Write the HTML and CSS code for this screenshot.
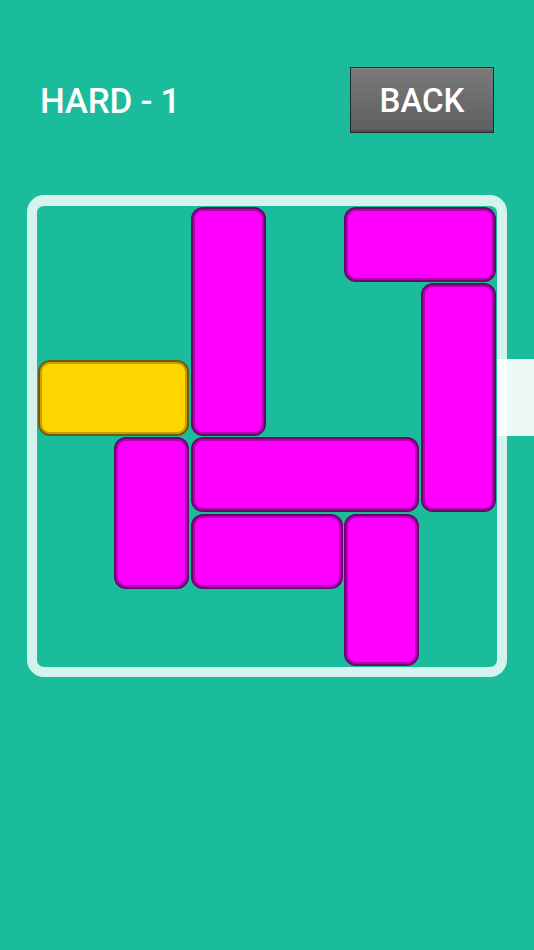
FILE: index.html
```html
<!DOCTYPE html>
<html>
<head>
<meta charset="utf-8">
<link rel="stylesheet" href="styles.css">
</head>
<body>
<div class="page">
  <header class="header">
    <div class="title">HARD - 1</div>
    <button class="back">BACK</button>
  </header>
  <div class="board">
    <div class="grid">
      <div class="block pink" style="grid-column:3/4;grid-row:1/4"></div>
      <div class="block pink" style="grid-column:5/7;grid-row:1/2"></div>
      <div class="block pink" style="grid-column:6/7;grid-row:2/5"></div>
      <div class="block gold" style="grid-column:1/3;grid-row:3/4"></div>
      <div class="block pink" style="grid-column:2/3;grid-row:4/6"></div>
      <div class="block pink" style="grid-column:3/6;grid-row:4/5"></div>
      <div class="block pink" style="grid-column:3/5;grid-row:5/6"></div>
      <div class="block pink" style="grid-column:5/6;grid-row:5/7"></div>
    </div>
    <div class="exit"></div>
  </div>
</div>
</body>
</html>
```
FILE: styles.css
```css
html, body {
  margin: 0;
  padding: 0;
  background: #1abc9c;
  font-family: Roboto, "Liberation Sans", sans-serif;
}
.page {
  width: 534px;
  height: 950px;
  overflow: hidden;
}
.header {
  display: flex;
  align-items: center;
  justify-content: space-between;
  padding: 67px 40px 0 40px;
  height: 66px;
}
.title {
  color: #ffffff;
  font-size: 35px;
  font-weight: 500;
  line-height: 1;
  margin-top: 2px;
  letter-spacing: -0.3px;
}
.back {
  width: 144px;
  height: 66px;
  box-sizing: border-box;
  border: 1px solid #1b2b27;
  border-bottom-color: #2a2a2a;
  background: linear-gradient(#7a7a7a 0%, #6c6c6c 50%, #5f5f5f 100%);
  box-shadow: inset 0 1px 0 rgba(255,255,255,0.15), inset 0 -2px 0 #505050;
  color: #ffffff;
  font-family: Roboto, "Liberation Sans", sans-serif;
  font-size: 33px;
  font-weight: 500;
  line-height: 1;
  padding: 0;
  margin: 0;
}
.board {
  position: relative;
  margin: 62px 0 0 27px;
  width: 480px;
  height: 482px;
  box-sizing: border-box;
  border: 10px solid #d5f2ee;
  border-top-width: 11px;
  border-radius: 17px;
}
.grid {
  display: grid;
  grid-template-columns: repeat(6, 1fr);
  grid-template-rows: repeat(6, 1fr);
  width: 460px;
  height: 461px;
}
.block {
  margin: 0.5px 1px 1px 0.5px;
  border-radius: 12px;
  box-sizing: border-box;
}
.pink {
  background: #ff00ff;
  border: 2px solid #6a056a;
  box-shadow: inset 0 0 0 2px #b400b4;
}
.gold {
  background: #ffd500;
  border: 2px solid #6e5c0c;
  box-shadow: inset 0 0 0 2px #c4a000;
}
.exit {
  position: absolute;
  left: 460px;
  top: 153px;
  width: 37px;
  height: 77px;
  background: linear-gradient(to right, #fbfffe 0, #fbfffe 10px, #ecf9f6 10px);
}
```
